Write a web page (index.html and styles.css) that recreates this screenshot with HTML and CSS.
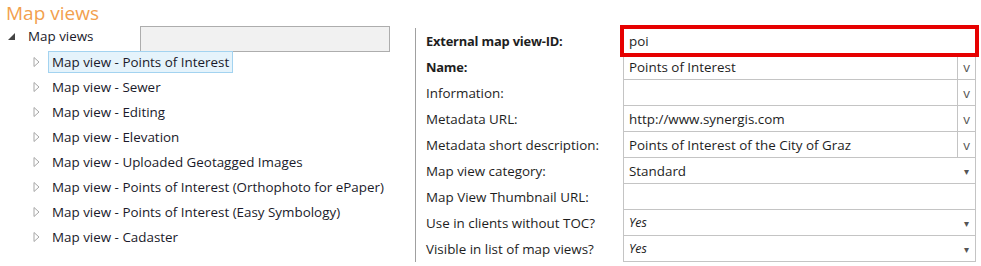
FILE: index.html
```html
<!DOCTYPE html>
<html lang="en">
<head>
  <meta charset="UTF-8" />
  <title>Map views</title>
  <link rel="stylesheet" href="styles.css">
</head>
<body>

  <h1 class="title">Map views</h1>

  <div class="main">
    <!-- Tree -->
    <div class="tree">
      <div class="tree-root">
        <svg class="root-arrow" width="7" height="7" viewBox="0 0 7 7"><path d="M7 0 L7 7 L0 7 Z" fill="#444"/></svg>
        <span class="root-label">Map views</span>
        <div class="filter-box"></div>
      </div>
      <ul class="tree-items">
        <li class="tree-item"><svg class="item-arrow" width="7" height="10" viewBox="0 0 7 10"><path d="M1 0.5 L6 5 L1 9.5 Z" fill="none" stroke="#a6a6a6"/></svg><span class="item-label selected">Map view - Points of Interest</span></li>
        <li class="tree-item"><svg class="item-arrow" width="7" height="10" viewBox="0 0 7 10"><path d="M1 0.5 L6 5 L1 9.5 Z" fill="none" stroke="#a6a6a6"/></svg><span class="item-label">Map view - Sewer</span></li>
        <li class="tree-item"><svg class="item-arrow" width="7" height="10" viewBox="0 0 7 10"><path d="M1 0.5 L6 5 L1 9.5 Z" fill="none" stroke="#a6a6a6"/></svg><span class="item-label">Map view - Editing</span></li>
        <li class="tree-item"><svg class="item-arrow" width="7" height="10" viewBox="0 0 7 10"><path d="M1 0.5 L6 5 L1 9.5 Z" fill="none" stroke="#a6a6a6"/></svg><span class="item-label">Map view - Elevation</span></li>
        <li class="tree-item"><svg class="item-arrow" width="7" height="10" viewBox="0 0 7 10"><path d="M1 0.5 L6 5 L1 9.5 Z" fill="none" stroke="#a6a6a6"/></svg><span class="item-label">Map view - Uploaded Geotagged Images</span></li>
        <li class="tree-item"><svg class="item-arrow" width="7" height="10" viewBox="0 0 7 10"><path d="M1 0.5 L6 5 L1 9.5 Z" fill="none" stroke="#a6a6a6"/></svg><span class="item-label">Map view - Points of Interest (Orthophoto for ePaper)</span></li>
        <li class="tree-item"><svg class="item-arrow" width="7" height="10" viewBox="0 0 7 10"><path d="M1 0.5 L6 5 L1 9.5 Z" fill="none" stroke="#a6a6a6"/></svg><span class="item-label">Map view - Points of Interest (Easy Symbology)</span></li>
        <li class="tree-item"><svg class="item-arrow" width="7" height="10" viewBox="0 0 7 10"><path d="M1 0.5 L6 5 L1 9.5 Z" fill="none" stroke="#a6a6a6"/></svg><span class="item-label">Map view - Cadaster</span></li>
      </ul>
    </div>

    <!-- Properties -->
    <div class="props">
      <div class="prop-label bold">External map view-ID:</div>
      <div class="field highlight"><span class="value">poi</span></div>

      <div class="prop-label bold">Name:</div>
      <div class="field"><span class="value">Points of Interest</span><span class="v-btn">v</span></div>

      <div class="prop-label">Information:</div>
      <div class="field"><span class="value"></span><span class="v-btn">v</span></div>

      <div class="prop-label">Metadata URL:</div>
      <div class="field"><span class="value">http://www.synergis.com</span><span class="v-btn">v</span></div>

      <div class="prop-label">Metadata short description:</div>
      <div class="field"><span class="value">Points of Interest of the City of Graz</span><span class="v-btn">v</span></div>

      <div class="prop-label">Map view category:</div>
      <div class="field"><span class="value">Standard</span><span class="drop">&#9662;</span></div>

      <div class="prop-label">Map View Thumbnail URL:</div>
      <div class="field"><span class="value"></span></div>

      <div class="prop-label">Use in clients without TOC?</div>
      <div class="field"><span class="value italic">Yes</span><span class="drop">&#9662;</span></div>

      <div class="prop-label">Visible in list of map views?</div>
      <div class="field"><span class="value italic">Yes</span><span class="drop">&#9662;</span></div>
    </div>
  </div>

</body>
</html>
```

FILE: styles.css
```css
body {
  font-family: "Open Sans", Lato, sans-serif;
  font-size: 13.4px;
  color: #1e1e1e;
  background-color: #fff;
  margin: 0;
  padding: 0;
  overflow: hidden;
}

.title {
  margin: 0;
  padding: 0 0 0 6px;
  height: 24px;
  line-height: 26px;
  font-size: 19px;
  font-weight: 400;
  color: #f2a04e;
}

.main {
  display: flex;
}

/* Tree */
.tree {
  width: 415px;
  flex-shrink: 0;
}

.tree-root {
  display: flex;
  align-items: flex-start;
  height: 25px;
}

.root-arrow {
  margin-top: 9px;
  margin-left: 8px;
  margin-right: 13px;
}

.root-label {
  width: 112px;
  line-height: 25px;
  color: #1a1a2a;
}

.filter-box {
  width: 248px;
  height: 24px;
  background-color: #f1f1f1;
  border: 1px solid #adadad;
  margin-top: 2px;
}

.tree-items {
  list-style: none;
  margin: 0;
  padding: 0;
}

.tree-item {
  display: flex;
  align-items: center;
  height: 25px;
  padding-left: 33px;
}

.item-arrow {
  margin-right: 8px;
}

.item-label {
  padding: 1px 3px;
  border: 1px solid transparent;
  color: #1a1a2a;
}

.item-label.selected {
  background-color: #e5f3fb;
  border-color: #a3d3f0;
}

/* Properties */
.props {
  display: grid;
  grid-template-columns: 197px 353px;
  grid-auto-rows: 26px;
  border-left: 1px solid #a0a0a0;
  margin-top: 4px;
  padding-left: 10px;
}

.prop-label {
  display: flex;
  align-items: center;
  white-space: nowrap;
  color: #1e1e1e;
}

.bold {
  font-weight: 700;
  font-size: 12.9px;
  letter-spacing: -0.2px;
}

.field {
  display: flex;
  align-items: center;
  border: 1px solid #c4c4c4;
  border-top: none;
}

.field.highlight {
  border-top: 1px solid #c4c4c4;
  outline: 4px solid #e60000;
  outline-offset: -1px;
  position: relative;
  z-index: 1;
}

.value {
  flex: 1;
  padding-left: 5px;
  white-space: nowrap;
}

.italic {
  font-style: italic;
  font-size: 12.5px;
}

.v-btn {
  width: 17px;
  height: 100%;
  border-left: 1px solid #c4c4c4;
  display: flex;
  align-items: center;
  justify-content: center;
  color: #555;
}

.drop {
  width: 17px;
  font-size: 10px;
  color: #555;
  text-align: center;
}
```
